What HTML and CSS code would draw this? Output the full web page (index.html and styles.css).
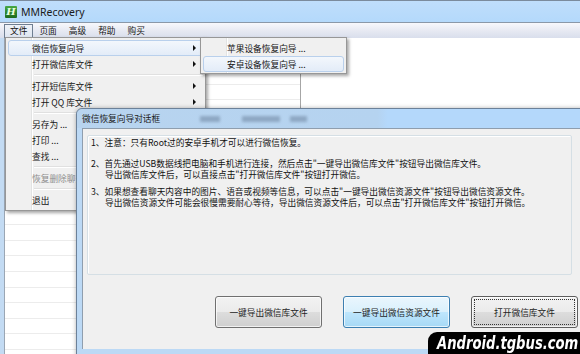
FILE: index.html
```html
<!DOCTYPE html>
<html lang="zh-CN">
<head>
<meta charset="utf-8">
<title>MMRecovery</title>
<link rel="stylesheet" href="styles.css">
</head>
<body>
<div class="window">
  <div class="titlebar">
    <span class="appicon">H</span>
    <span class="title">MMRecovery</span>
  </div>
  <div class="menubar">
    <span class="mb-item active">文件</span>
    <span class="mb-item">页面</span>
    <span class="mb-item">高级</span>
    <span class="mb-item">帮助</span>
    <span class="mb-item">购买</span>
  </div>
  <div class="content">
    <div class="list"></div>
  </div>
</div>

<div class="menu">
  <div class="mi hl">微信恢复向导<span class="arrow"></span></div>
  <div class="mi">打开微信库文件<span class="arrow"></span></div>
  <div class="sep"></div>
  <div class="mi">打开短信库文件<span class="arrow"></span></div>
  <div class="mi">打开 QQ 库文件<span class="arrow"></span></div>
  <div class="sep"></div>
  <div class="mi">另存为 ...</div>
  <div class="mi">打印 ...</div>
  <div class="mi">查找 ...</div>
  <div class="sep"></div>
  <div class="mi disabled">恢复删除聊天记录 ...</div>
  <div class="sep"></div>
  <div class="mi">退出</div>
</div>

<div class="submenu">
  <div class="mi">苹果设备恢复向导 ...</div>
  <div class="mi hl">安卓设备恢复向导 ...</div>
</div>

<div class="dialog">
  <div class="dlg-title">
    <span class="dlg-title-text">微信恢复向导对话框</span>
    <span class="blur b1"></span>
    <span class="blur b2"></span>
    <span class="blur b3"></span>
  </div>
  <div class="dlg-client">
    <div class="groupbox">
      <p class="p1">1、注意：只有Root过的安卓手机才可以进行微信恢复。</p>
      <p class="p2">2、首先通过USB数据线把电脑和手机进行连接，然后点击"一键导出微信库文件"按钮导出微信库文件。<br>导出微信库文件后，可以直接点击"打开微信库文件"按钮打开微信。</p>
      <p class="p3">3、如果想查看聊天内容中的图片、语音或视频等信息，可以点击"一键导出微信资源文件"按钮导出微信资源文件。<br>导出微信资源文件可能会很慢需要耐心等待，导出微信资源文件后，可以点击"打开微信库文件"按钮打开微信。</p>
    </div>
    <div class="buttons">
      <button class="btn">一键导出微信库文件</button>
      <button class="btn focus">一键导出微信资源文件</button>
      <button class="btn default">打开微信库文件</button>
    </div>
  </div>
</div>

<div class="watermark"><span class="wm-text">Android.tgbus.com</span></div>
</body>
</html>
```

FILE: styles.css
```css
* { box-sizing: border-box; margin: 0; padding: 0; }
html, body { width: 580px; height: 354px; overflow: hidden; }
body {
  position: relative;
  font-family: "Noto Sans CJK SC", "Noto Sans", sans-serif;
  font-size: 8.7px;
  color: #151515;
  background: #c6dcf2;
}

/* main window */
.window {
  display: flex;
  flex-direction: column;
  height: 354px;
  border-top: 1px solid #7b8b9c;
  background: #c3dbf3;
}
.titlebar {
  height: 22px;
  display: flex;
  align-items: center;
  gap: 4px;
  padding-left: 5px;
  background: linear-gradient(#bfdefb, #b4d9fb);
  border-bottom: 1px solid #8a98a8;
}
.appicon {
  width: 12px;
  height: 12px;
  background: linear-gradient(#47a845, #1b6a1c);
  color: #e8ffe0;
  font: italic bold 10px/12px "DejaVu Serif", serif;
  text-align: center;
  border-radius: 1px;
}
.title {
  font: 10.5px "Noto Sans", sans-serif;
  color: #1b1b1b;
}
.menubar {
  height: 15px;
  display: flex;
  align-items: center;
  padding-left: 4px;
  background: linear-gradient(#f7f8fc, #e4e7f1 60%, #d9deec);
}
.mb-item {
  padding: 0 5px;
  line-height: 12px;
  border: 1px solid transparent;
}
.mb-item.active {
  border-color: #6f7f92;
  background: linear-gradient(#eef2f8, #dfe6f1);
}
.content {
  flex: 1;
  display: flex;
  margin-left: 4px;
  background: #fff;
}
.list {
  width: 297px;
  border-left: 1px solid #9aa6b4;
  border-right: 1px solid #a6a6a6;
  background: repeating-linear-gradient(#fff 0, #fff 14.6px, #ececec 14.6px, #ececec 15.6px);
}

/* dropdown menu */
.menu {
  position: absolute;
  left: 5px;
  top: 37px;
  width: 201px;
  height: 174px;
  padding: 2px;
  border: 1px solid #979797;
  background:
    linear-gradient(to right, transparent 25px, #e2e3e3 25px, #e2e3e3 26px, #fff 26px, #fff 27px, transparent 27px),
    #f0f0f0;
  box-shadow: 2px 2px 3px rgba(0, 0, 0, .35);
}
.mi {
  height: 16px;
  display: flex;
  align-items: center;
  padding-left: 23px;
  white-space: nowrap;
  border: 1px solid transparent;
  border-radius: 3px;
}
.mi.hl {
  border-color: #b9d0ec;
  background: linear-gradient(#f3f7fc, #e3ecf8);
}
.mi.disabled { color: #8e8e8e; }
.arrow {
  margin-left: auto;
  margin-right: 6px;
  width: 0;
  height: 0;
  border-left: 3px solid #111;
  border-top: 3px solid transparent;
  border-bottom: 3px solid transparent;
}
.sep {
  height: 6px;
  margin-left: 26px;
  display: flex;
  flex-direction: column;
  justify-content: center;
}
.sep::before {
  content: "";
  display: block;
  border-top: 1px solid #e0e0e0;
  border-bottom: 1px solid #fff;
}

.submenu {
  position: absolute;
  left: 200px;
  top: 37px;
  width: 147px;
  height: 37px;
  padding: 2px;
  border: 1px solid #979797;
  background:
    linear-gradient(to right, transparent 25px, #e2e3e3 25px, #e2e3e3 26px, #fff 26px, #fff 27px, transparent 27px),
    #f0f0f0;
  box-shadow: 2px 2px 3px rgba(0, 0, 0, .35);
}

/* dialog */
.dialog {
  position: absolute;
  left: 76px;
  top: 108px;
  width: 520px;
  height: 260px;
  border: 1px solid #6c8199;
  border-radius: 6px 6px 0 0;
  background: #bcd9f5;
  padding: 0 0 0 5px;
  box-shadow: 0 0 4px rgba(0, 0, 0, .3);
}
.dlg-title {
  height: 19px;
  display: flex;
  align-items: center;
  background: linear-gradient(to right, #b8d4ef, #b5d3f0 58%, #b4d8fb 60%, #b4d8fb);
  margin-left: -5px;
  padding-left: 5px;
  border-radius: 6px 6px 0 0;
}
.dlg-title-text { color: #1a1a1a; }
.blur {
  height: 6px;
  background: #7d95b0;
  filter: blur(1.5px);
  opacity: .7;
}
.b1 { width: 20px; margin-left: 40px; }
.b2 { width: 38px; margin-left: 22px; }
.b3 { width: 17px; margin-left: 10px; }

.dlg-client {
  height: 221px;
  border-top: 1px solid #8f9eae;
  border-left: 1px solid #8f9eae;
  background: #f0f0f0;
  display: flex;
  flex-direction: column;
}
.groupbox {
  margin: 6px 0 0 4px;
  width: 485px;
  height: 140px;
  border: 1px solid #d5dfe5;
  border-radius: 2px;
  box-shadow: inset 1px 1px 0 #fff;
  padding: 2px 0 0 3px;
  line-height: 10.3px;
  color: #111;
}
.groupbox p {
  padding-left: 14px;
  text-indent: -14px;
}
.p2 { margin-top: 11px; }
.p3 { margin-top: 7.5px; }

.buttons {
  display: flex;
  gap: 21px;
  margin-top: 21px;
  padding-left: 132px;
}
.btn {
  width: 107px;
  height: 32px;
  font: inherit;
  color: #1e1e1e;
  border: 1px solid #707070;
  border-radius: 3px;
  background: linear-gradient(#f2f2f2 0, #ebebeb 50%, #dddddd 50%, #cfcfcf 100%);
  box-shadow: inset 0 0 0 1px rgba(255, 255, 255, .7);
}
.btn.focus {
  border-color: #3c7fb1;
  background: linear-gradient(#eaf6fd 0, #d9f0fc 50%, #bee6fd 50%, #a7d9f5 100%);
}
.btn.default {
  border-color: #5d5d5d;
  outline: 1px dotted #333;
  outline-offset: -4px;
}

/* watermark */
.watermark {
  position: absolute;
  left: 428px;
  top: 332px;
  width: 160px;
  height: 30px;
  background: #000;
  border-radius: 9px 0 0 9px;
  padding-left: 9px;
}
.wm-text {
  display: inline-block;
  color: #fff;
  font-family: "DejaVu Sans Condensed", "DejaVu Sans", sans-serif;
  font-stretch: condensed;
  font-weight: bold;
  font-style: italic;
  font-size: 17px;
  line-height: 22px;
  white-space: nowrap;
  transform: scaleX(0.86);
  transform-origin: left center;
}
```
